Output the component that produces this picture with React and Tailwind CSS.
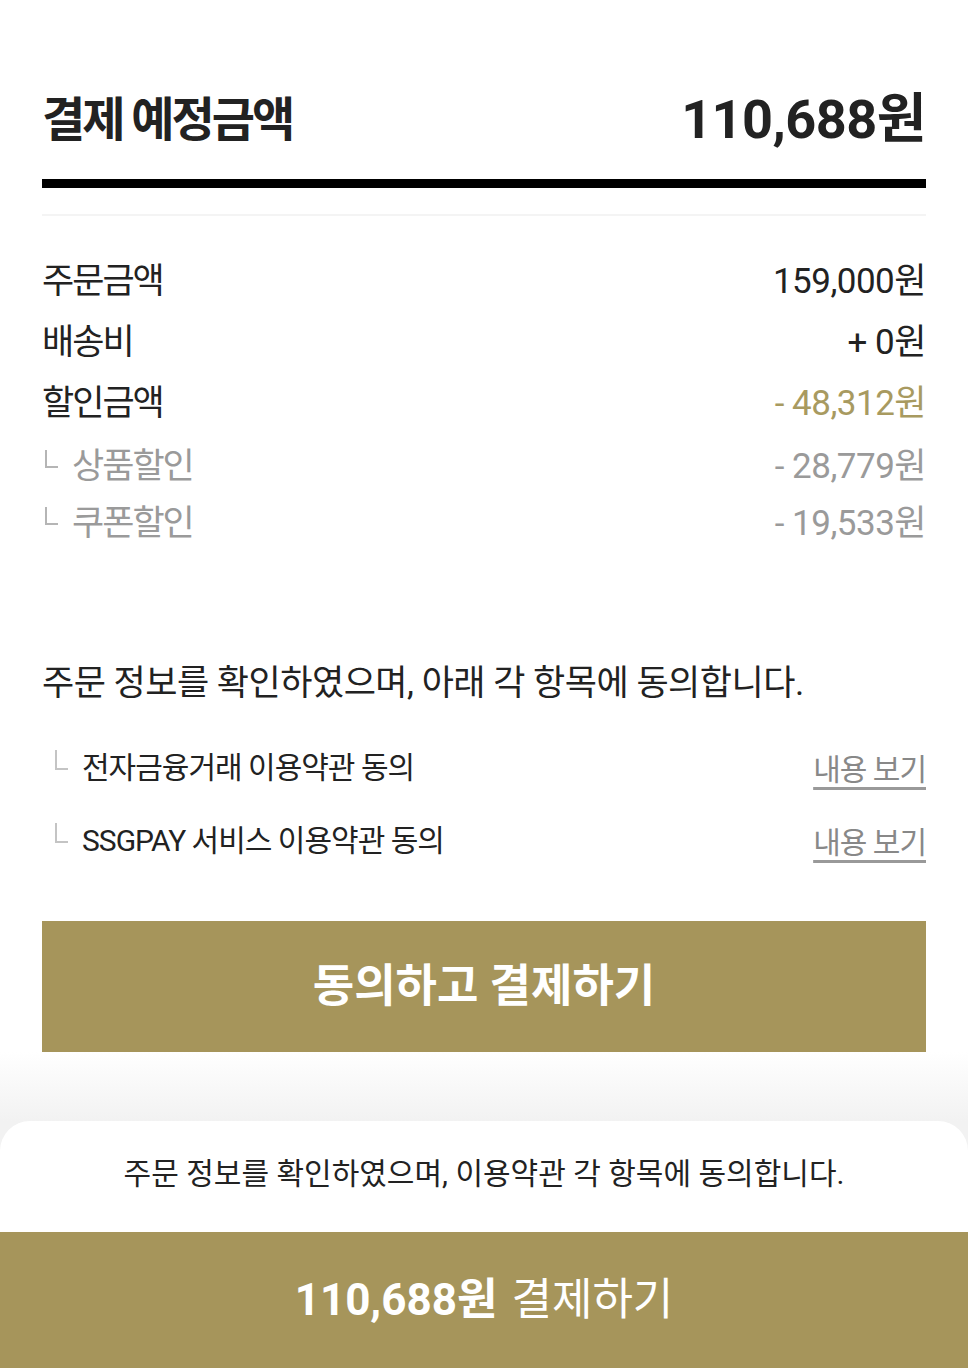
function Corner({ className }) {
  return <span className={"inline-block w-[13px] border-l-2 border-b-2 border-[#b5b5b5] " + className} />;
}

export default function App() {
  const font = { fontFamily: '"Roboto", "Noto Sans CJK KR", sans-serif' };
  return (
    <div className="w-[968px] h-[1368px] bg-white flex flex-col text-[#222]" style={font}>
      <div className="px-[42px] flex flex-col flex-1">
        <div className="flex items-center justify-between pt-[90px] pb-[29px]">
          <span className="text-[47px] font-bold tracking-[-3px] leading-[60px]">결제 예정금액</span>
          <span className="text-[54px] font-bold tracking-[-0.5px] leading-[60px]">110,688원</span>
        </div>
        <div className="h-[9px] bg-black" />
        <div className="h-[2px] bg-[#f4f4f4] mt-[26px]" />
        <div className="flex flex-col mt-[36px] text-[35px]">
          <div className="flex justify-between items-center h-[61px]">
            <span className="tracking-[-2px]">주문금액</span>
            <span className="tracking-[-0.5px]">159,000원</span>
          </div>
          <div className="flex justify-between items-center h-[61px]">
            <span className="tracking-[-2px]">배송비</span>
            <span className="tracking-[-0.5px]">+ 0원</span>
          </div>
          <div className="flex justify-between items-center h-[61px]">
            <span className="tracking-[-2px]">할인금액</span>
            <span className="tracking-[-0.5px] text-[#a89a60]">- 48,312원</span>
          </div>
          <div className="flex justify-between items-center h-[64px] text-[#9a9a9a]">
            <span className="tracking-[-2px] flex items-center">
              <Corner className="h-[18px] ml-[3px] mr-[14px] -mt-[16px]" />상품할인
            </span>
            <span className="tracking-[-0.5px]">- 28,779원</span>
          </div>
          <div className="flex justify-between items-center h-[50px] text-[#9a9a9a]">
            <span className="tracking-[-2px] flex items-center">
              <Corner className="h-[18px] ml-[3px] mr-[14px] -mt-[16px]" />쿠폰할인
            </span>
            <span className="tracking-[-0.5px]">- 19,533원</span>
          </div>
        </div>
        <div className="mt-[113px] text-[35px] tracking-[-0.5px] leading-[44px]">주문 정보를 확인하였으며, 아래 각 항목에 동의합니다.</div>
        <div className="flex flex-col mt-[39px] gap-[29px]">
          <div className="flex justify-between items-center h-[44px]">
            <span className="flex items-center text-[30px] tracking-[-1px]">
              <Corner className="h-[20px] ml-[13px] mr-[14px] -mt-[14px] border-[#c4c4c4]" />전자금융거래 이용약관 동의
            </span>
            <span className="text-[30px] tracking-[-1px] text-[#888] underline underline-offset-[7px] decoration-[3px] decoration-[#999] mt-[4px]">내용 보기</span>
          </div>
          <div className="flex justify-between items-center h-[44px]">
            <span className="flex items-center text-[30px] tracking-[-1px]">
              <Corner className="h-[20px] ml-[13px] mr-[14px] -mt-[14px] border-[#c4c4c4]" />SSGPAY 서비스 이용약관 동의
            </span>
            <span className="text-[30px] tracking-[-1px] text-[#888] underline underline-offset-[7px] decoration-[3px] decoration-[#999] mt-[4px]">내용 보기</span>
          </div>
        </div>
        <div className="mt-[59px] h-[131px] bg-[#a6955b] flex items-center justify-center text-white text-[45px] font-bold">동의하고 결제하기</div>
      </div>
      <div className="h-[69px] bg-gradient-to-b from-white to-[#f2f2f2]" />
      <div className="bg-[#f2f2f2]">
        <div className="bg-white rounded-t-[30px] h-[111px] pb-[6px] flex items-center justify-center text-[30px]">주문 정보를 확인하였으며, 이용약관 각 항목에 동의합니다.</div>
      </div>
      <div className="h-[136px] bg-[#a6955b] flex items-center justify-center text-white text-[44px]">
        <span className="font-bold">110,688원</span>
        <span className="ml-[14px]">결제하기</span>
      </div>
    </div>
  );
}
